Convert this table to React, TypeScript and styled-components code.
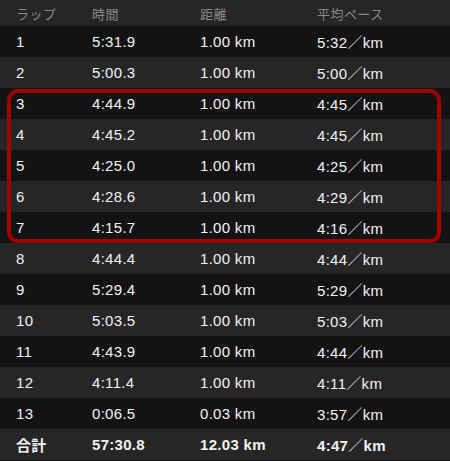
import React from "react";
import styled, { createGlobalStyle } from "styled-components";

const Global = createGlobalStyle`
  html, body { margin: 0; padding: 0; background: #131313; }
  body { width: 450px; height: 461px; overflow: hidden; }
`;

const Table = styled.div`
  width: 450px;
  font-family: "Liberation Sans", "Noto Sans CJK JP", sans-serif;
  color: #f2f2f2;
`;

const Row = styled.div<{ $light?: boolean; $head?: boolean; $bold?: boolean }>`
  display: grid;
  grid-template-columns: 76px 108px 117px 1fr;
  align-items: center;
  padding-left: 16px;
  height: ${(p) => (p.$head ? "26px" : "31px")};
  background: ${(p) => (p.$light || p.$head ? "#262626" : "#131313")};
  font-size: ${(p) => (p.$head ? "13px" : "15px")};
  color: ${(p) => (p.$head ? "#8a8a8a" : "#f2f2f2")};
  font-weight: ${(p) => (p.$bold ? 700 : 400)};
  letter-spacing: ${(p) => (p.$head ? "0.5px" : "0.3px")};
`;

const Cell = styled.span`
  white-space: nowrap;
`;

const Slash = styled.span`
  font-family: "Noto Sans CJK JP", sans-serif;
  font-weight: 300;
`;

const Highlight = styled.div`
  position: relative;
  &::after {
    content: "";
    position: absolute;
    left: 7px;
    right: 9px;
    top: 1px;
    bottom: 0;
    border: 4px solid #a00000;
    border-radius: 11px;
    pointer-events: none;
  }
`;

type Lap = [string, string, string, string];

const laps: Lap[] = [
  ["1", "5:31.9", "1.00", "5:32"],
  ["2", "5:00.3", "1.00", "5:00"],
  ["3", "4:44.9", "1.00", "4:45"],
  ["4", "4:45.2", "1.00", "4:45"],
  ["5", "4:25.0", "1.00", "4:25"],
  ["6", "4:28.6", "1.00", "4:29"],
  ["7", "4:15.7", "1.00", "4:16"],
  ["8", "4:44.4", "1.00", "4:44"],
  ["9", "5:29.4", "1.00", "5:29"],
  ["10", "5:03.5", "1.00", "5:03"],
  ["11", "4:43.9", "1.00", "4:44"],
  ["12", "4:11.4", "1.00", "4:11"],
  ["13", "0:06.5", "0.03", "3:57"],
];

const LapRow: React.FC<{ lap: Lap; index: number; bold?: boolean }> = ({ lap, index, bold }) => (
  <Row $light={index % 2 === 1} $bold={bold}>
    <Cell>{lap[0]}</Cell>
    <Cell>{lap[1]}</Cell>
    <Cell>{lap[2]} km</Cell>
    <Cell>
      {lap[3]}
      <Slash>／</Slash>km
    </Cell>
  </Row>
);

export default function App() {
  return (
    <>
      <Global />
      <Table>
        <Row $head>
          <Cell>ラップ</Cell>
          <Cell>時間</Cell>
          <Cell>距離</Cell>
          <Cell>平均ペース</Cell>
        </Row>
        {laps.slice(0, 2).map((l, i) => (
          <LapRow key={l[0]} lap={l} index={i} />
        ))}
        <Highlight>
          {laps.slice(2, 7).map((l, i) => (
            <LapRow key={l[0]} lap={l} index={i + 2} />
          ))}
        </Highlight>
        {laps.slice(7).map((l, i) => (
          <LapRow key={l[0]} lap={l} index={i + 7} />
        ))}
        <LapRow lap={["合計", "57:30.8", "12.03", "4:47"]} index={13} bold />
      </Table>
    </>
  );
}
